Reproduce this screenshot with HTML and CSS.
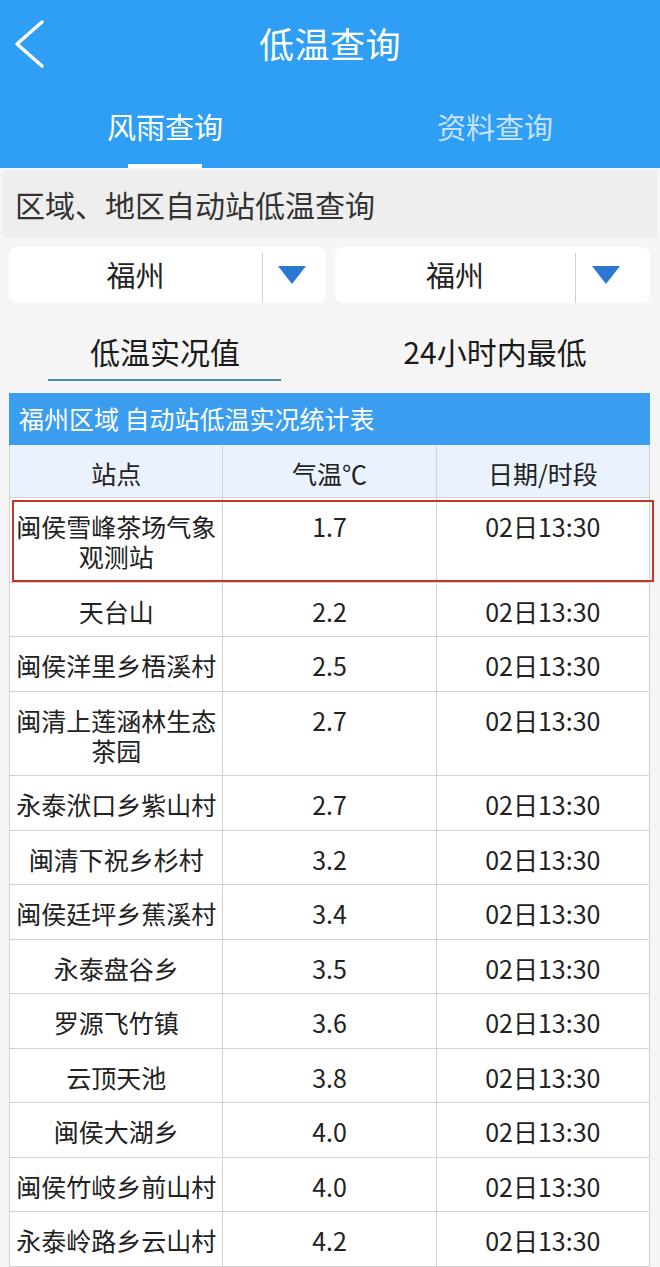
FILE: index.html
```html
<!DOCTYPE html>
<html lang="zh-CN">
<head>
<meta charset="utf-8">
<title>低温查询</title>
<link rel="stylesheet" href="styles.css">
</head>
<body>
<header class="appbar">
  <div class="topbar">
    <svg class="back" width="40" height="56" viewBox="0 0 40 56" aria-hidden="true">
      <polyline points="28,5 3,27 28,49" fill="none" stroke="#ffffff" stroke-width="3.5" stroke-linecap="round" stroke-linejoin="round"/>
    </svg>
    <h1 class="title">低温查询</h1>
  </div>
  <nav class="tabs">
    <div class="tab active"><span>风雨查询</span></div>
    <div class="tab"><span>资料查询</span></div>
  </nav>
</header>

<div class="section-title">区域、地区自动站低温查询</div>

<div class="selects">
  <div class="select">
    <span class="select-text">福州</span>
    <span class="select-arrow"><span class="tri"></span></span>
  </div>
  <div class="select select-wide">
    <span class="select-text">福州</span>
    <span class="select-arrow"><span class="tri"></span></span>
  </div>
</div>

<div class="subtabs">
  <div class="subtab active"><span>低温实况值</span></div>
  <div class="subtab"><span>24小时内最低</span></div>
</div>

<div class="report">
  <div class="report-title">福州区域 自动站低温实况统计表</div>
  <table class="data">
    <thead>
      <tr><th>站点</th><th>气温℃</th><th>日期/时段</th></tr>
    </thead>
    <tbody>
      <tr><td>闽侯雪峰茶场气象观测站</td><td>1.7</td><td>02日13:30</td></tr>
      <tr><td>天台山</td><td>2.2</td><td>02日13:30</td></tr>
      <tr><td>闽侯洋里乡梧溪村</td><td>2.5</td><td>02日13:30</td></tr>
      <tr><td>闽清上莲涵林生态茶园</td><td>2.7</td><td>02日13:30</td></tr>
      <tr><td>永泰洑口乡紫山村</td><td>2.7</td><td>02日13:30</td></tr>
      <tr><td>闽清下祝乡杉村</td><td>3.2</td><td>02日13:30</td></tr>
      <tr><td>闽侯廷坪乡蕉溪村</td><td>3.4</td><td>02日13:30</td></tr>
      <tr><td>永泰盘谷乡</td><td>3.5</td><td>02日13:30</td></tr>
      <tr><td>罗源飞竹镇</td><td>3.6</td><td>02日13:30</td></tr>
      <tr><td>云顶天池</td><td>3.8</td><td>02日13:30</td></tr>
      <tr><td>闽侯大湖乡</td><td>4.0</td><td>02日13:30</td></tr>
      <tr><td>闽侯竹岐乡前山村</td><td>4.0</td><td>02日13:30</td></tr>
      <tr><td>永泰岭路乡云山村</td><td>4.2</td><td>02日13:30</td></tr>
    </tbody>
  </table>
  <div class="highlight"></div>
</div>
</body>
</html>
```

FILE: styles.css
```css
* { box-sizing: border-box; }

html, body {
  margin: 0;
  padding: 0;
}

body {
  background: #f5f5f5;
  font-family: "Noto Sans CJK SC", "Noto Sans", sans-serif;
  color: #222;
  width: 660px;
  overflow-x: hidden;
}

.appbar {
  background: #2f9ef5;
  height: 168px;
  display: flex;
  flex-direction: column;
}

.topbar {
  height: 90px;
  display: flex;
  align-items: center;
  justify-content: center;
  position: relative;
  padding-bottom: 6px;
}

.back {
  position: absolute;
  left: 14px;
  top: 17px;
}

.title {
  margin: 0;
  font-size: 35px;
  font-weight: 400;
  color: #fff;
  line-height: 1;
  letter-spacing: 0.5px;
}

.tabs {
  flex: 1;
  display: flex;
}

.tab {
  flex: 1;
  display: flex;
  flex-direction: column;
  align-items: center;
  justify-content: flex-end;
  position: relative;
}

.tab span {
  font-size: 29px;
  line-height: 32px;
  color: #c6e3fb;
  margin-bottom: 26px;
}

.tab.active span {
  color: #fff;
}

.tab.active::after {
  content: "";
  position: absolute;
  bottom: 0;
  left: 50%;
  width: 74px;
  margin-left: -37px;
  height: 4px;
  background: #fff;
}

.section-title {
  margin: 2px 3px 0;
  height: 68px;
  background: #eeeeee;
  font-size: 30px;
  line-height: 68px;
  padding-left: 12px;
  color: #333;
}

.selects {
  display: grid;
  grid-template-columns: 317px 315px;
  gap: 9px;
  padding: 9px 10px 0 9px;
}

.select {
  height: 56px;
  background: #fff;
  border-radius: 8px;
  display: flex;
  align-items: stretch;
}

.select-text {
  flex: 1;
  text-align: center;
  font-size: 29px;
  line-height: 54px;
  color: #222;
}

.select-arrow {
  width: 64px;
  border-left: 1px solid #d0d0d0;
  margin-top: 6px;
  display: flex;
  align-items: center;
  justify-content: flex-start;
  padding: 0 0 6px 15px;
}

.select-wide .select-arrow {
  width: 75px;
  padding-left: 16px;
}

.tri {
  width: 0;
  height: 0;
  border-left: 14px solid transparent;
  border-right: 14px solid transparent;
  border-top: 18px solid #2a78d2;
}

.subtabs {
  display: flex;
  height: 78px;
}

.subtab {
  flex: 1;
  display: flex;
  flex-direction: column;
  align-items: center;
  justify-content: flex-end;
  position: relative;
}

.subtab span {
  font-size: 30px;
  line-height: 30px;
  color: #1a1a1a;
  margin-bottom: 15px;
}

.subtab.active::after {
  content: "";
  position: absolute;
  bottom: 0;
  left: 50%;
  width: 233px;
  margin-left: -117px;
  height: 2px;
  background: #4b8ea6;
}

.report {
  margin: 12px 10px 0 9px;
  position: relative;
}

.report-title {
  height: 52px;
  background: #3a9df0;
  color: #fff;
  font-size: 25px;
  line-height: 50px;
  padding-left: 10px;
}

.data {
  width: 641px;
  border-collapse: collapse;
  table-layout: fixed;
  background: #fff;
}

.data th,
.data td {
  border: 1px solid #d2d2d2;
  font-size: 25px;
  line-height: 30px;
  font-weight: 400;
  text-align: center;
  vertical-align: top;
  padding: 13px 2px 10.5px;
  color: #222;
}

.data th {
  background: #eaf3fd;
  padding: 13px 2px 9px;
  border-top: none;
}

.highlight {
  position: absolute;
  left: 3px;
  top: 107px;
  width: 642px;
  height: 82px;
  border: 2px solid #c4352c;
  pointer-events: none;
}
```
